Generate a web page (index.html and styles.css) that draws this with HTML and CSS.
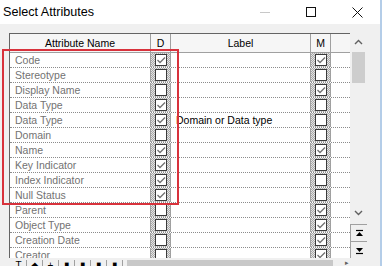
FILE: index.html
```html
<!DOCTYPE html>
<html>
<head>
    <link rel="stylesheet" href="styles.css">
</head>
<body>
<div class="window">
    <div class="titlebar">
        <span class="title">Select Attributes</span>
        <div class="caption">
            <span class="cap-btn"><svg width="10" height="10" viewBox="0 0 10 10"><line x1="0" y1="5.5" x2="10" y2="5.5" stroke="#c8c8c8" stroke-width="1"/></svg></span>
            <span class="cap-btn"><svg width="10" height="10" viewBox="0 0 10 10"><rect x="0.5" y="0.5" width="9" height="9" fill="none" stroke="#111" stroke-width="1"/></svg></span>
            <span class="cap-btn"><svg width="11" height="11" viewBox="0 0 11 11"><path d="M0.5 0.5 L10.5 10.5 M10.5 0.5 L0.5 10.5" stroke="#111" stroke-width="1"/></svg></span>
        </div>
    </div>

    <div class="client">
        <div class="grid-area">
            <div class="grid" id="grid">
                <div class="row head">
                    <div class="cell name">Attribute Name</div>
                    <div class="cell col-chk">D</div>
                    <div class="cell label">Label</div>
                    <div class="cell col-chk">M</div>
                    <div class="cell fill"></div>
                </div>
            </div>
            <div class="vscroll">
                <div class="sb-arrow"><svg width="9" height="6" viewBox="0 0 9 6"><path d="M1 5 L4.5 1.5 L8 5" fill="none" stroke="#606060" stroke-width="1.4"/></svg></div>
                <div class="sb-thumb"></div>
                <div class="sb-track"></div>
                <div class="sb-arrow"><svg width="9" height="6" viewBox="0 0 9 6"><path d="M1 1 L4.5 4.5 L8 1" fill="none" stroke="#606060" stroke-width="1.4"/></svg></div>
                <div class="move-box">
                    <div class="move-btn"><svg width="9" height="9" viewBox="0 0 9 9"><path d="M1 1.5 H8" stroke="#000" stroke-width="1.2"/><path d="M4.5 3 L8 7 H1 Z" fill="#000"/></svg></div>
                    <div class="move-btn"><svg width="9" height="9" viewBox="0 0 9 9"><path d="M1 7.5 H8" stroke="#000" stroke-width="1.2"/><path d="M4.5 6 L8 2 H1 Z" fill="#000"/></svg></div>
                </div>
            </div>
        </div>
        <div class="hbar">
            <div class="tools">
                <span class="tool">T</span>
                <span class="tool">&#9670;</span>
                <span class="tool">+</span>
                <span class="tool">&#9646;</span>
                <span class="tool">&#9646;</span>
                <span class="tool">&#9646;</span>
                <span class="tool">&#9646;</span>
            </div>
            <div class="h-thumb"></div>
            <div class="h-track"><span class="h-arrow">&#9656;</span></div>
        </div>
    </div>

    <div class="highlight"></div>
</div>

<script>
// 属性列表: 名称, D, 标签, M
const attributes = [
    ["Code", true, "", true],
    ["Stereotype", false, "", false],
    ["Display Name", false, "", true],
    ["Data Type", true, "", false],
    ["Data Type", true, "Domain or Data type", false],
    ["Domain", false, "", false],
    ["Name", true, "", true],
    ["Key Indicator", true, "", false],
    ["Index Indicator", true, "", false],
    ["Null Status", true, "", false],
    ["Parent", false, "", true],
    ["Object Type", false, "", true],
    ["Creation Date", false, "", true],
    ["Creator", false, "", true]
];

const tick = '<svg width="10" height="10" viewBox="0 0 10 10"><path d="M1.5 5 L4 7.5 L9 2.5" fill="none" stroke="#707070" stroke-width="1.3"/></svg>';

function checkCell(on) {
    return `<div class="cell col-chk"><span class="box">${on ? tick : ""}</span></div>`;
}

const grid = document.getElementById('grid');
attributes.forEach(([name, d, label, m]) => {
    const row = document.createElement('div');
    row.className = 'row';
    row.innerHTML = `
        <div class="cell name">${name}</div>
        ${checkCell(d)}
        <div class="cell label">${label}</div>
        ${checkCell(m)}
        <div class="cell fill"></div>
    `;
    grid.appendChild(row);
});
</script>
</body>
</html>
```

FILE: styles.css
```css
body {
    margin: 0;
    width: 382px;
    height: 266px;
    overflow: hidden;
    background: #f0f0f0;
    font-family: "Liberation Sans", Arial, sans-serif;
}

.window {
    position: relative;
    width: 380px;
    height: 266px;
    border-right: 2px solid #b4cde8;
}

/* 标题栏 */
.titlebar {
    height: 24px;
    background: #fff;
    display: flex;
    align-items: center;
}

.title {
    padding-left: 3px;
    font-size: 12.6px;
    color: #000;
}

.caption {
    margin-left: auto;
    display: flex;
}

.cap-btn {
    width: 46px;
    height: 24px;
    display: flex;
    align-items: center;
    justify-content: center;
}

/* 表格区域 */
.client {
    padding: 9px 0 0 9px;
}

.grid-area {
    display: flex;
    height: 225px;
}

.grid {
    width: 341px;
    border-left: 1px solid #646464;
    border-top: 1px solid #646464;
    background: #fff;
    overflow: hidden;
    box-sizing: border-box;
}

.row {
    display: flex;
    height: 15px;
    border-bottom: 1px dotted #8c8c8c;
    box-sizing: border-box;
    font-size: 10.5px;
    line-height: 14px;
    color: #727272;
}

.row.head {
    height: 19px;
    line-height: 18px;
    background: #f6f6f6;
    border-bottom: 1px solid #a0a0a0;
    color: #000;
}

.cell {
    box-sizing: border-box;
    height: 100%;
    white-space: nowrap;
    overflow: hidden;
}

.name {
    width: 141px;
    padding-left: 5px;
    border-right: 1px solid #a0a0a0;
}

.label {
    width: 140px;
    padding-left: 5px;
    border-right: 1px solid #a0a0a0;
    color: #000;
}

.head .name,
.head .label,
.head .col-chk {
    text-align: center;
    padding-left: 0;
}

.col-chk {
    width: 20px;
    border-right: 1px solid #a0a0a0;
    display: flex;
    align-items: center;
    justify-content: center;
    background: repeating-conic-gradient(#a8a8a8 0 25%, #e4e4e4 0 50%) 0 0 / 2px 2px;
}

.head .col-chk {
    display: block;
    background: #f6f6f6;
}

.fill {
    width: 19px;
}

.box {
    width: 12px;
    height: 12px;
    box-sizing: border-box;
    border: 1px solid #3a3a3a;
    background: #fff;
    display: flex;
    align-items: center;
    justify-content: center;
    margin-left: 1px;
}

/* 竖直滚动条 */
.vscroll {
    width: 17px;
    display: flex;
    flex-direction: column;
    background: #f0f0f0;
}

.sb-arrow {
    height: 18px;
    display: flex;
    align-items: center;
    justify-content: center;
}

.sb-thumb {
    height: 31px;
    margin: 1px 2px 0 2px;
    background: #cdcdcd;
}

.sb-track {
    flex: 1;
}

.move-box {
    margin-top: 2px;
    height: 33px;
    border-left: 1px solid #a0a0a0;
    border-top: 1px solid #a0a0a0;
    display: flex;
    flex-direction: column;
}

.move-btn {
    height: 16px;
    display: flex;
    align-items: center;
    justify-content: center;
}

.move-btn + .move-btn {
    border-top: 1px solid #a0a0a0;
}

/* 底部工具栏和水平滚动条 */
.hbar {
    display: flex;
    height: 8px;
    width: 358px;
    overflow: hidden;
}

.tools {
    width: 118px;
    display: flex;
    padding-left: 2px;
    box-sizing: border-box;
    font-size: 10px;
    line-height: 12px;
    margin-top: 2px;
}

.tool {
    width: 16px;
    text-align: center;
    border-right: 1px solid #a0a0a0;
    box-sizing: border-box;
}

.h-thumb {
    width: 206px;
    margin-top: 2px;
    background: #c8c8c8;
}

.h-track {
    flex: 1;
    position: relative;
}

.h-arrow {
    position: absolute;
    left: 12px;
    top: 1px;
    font-size: 7px;
    line-height: 7px;
    color: #606060;
}

/* 红色标注框 */
.highlight {
    position: absolute;
    left: 2px;
    top: 49px;
    width: 177px;
    height: 156px;
    box-sizing: border-box;
    border: 2px solid #d8323c;
}
```
